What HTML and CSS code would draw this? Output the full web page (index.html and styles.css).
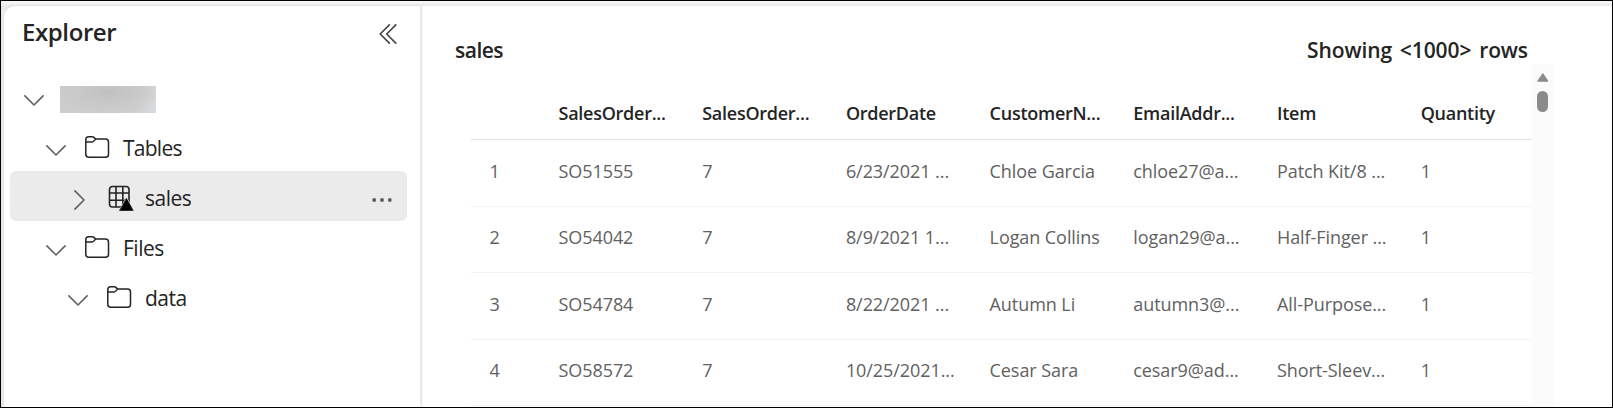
FILE: index.html
```html
<!DOCTYPE html>
<html lang="en">
<head>
<meta charset="utf-8">
<title>Explorer</title>
<link rel="stylesheet" href="styles.css">
</head>
<body>
<svg class="defs" width="0" height="0">
  <symbol id="down" viewBox="0 0 20 11"><path d="M.9.9 10 10 19.1.9"/></symbol>
  <symbol id="folder" viewBox="0 0 26 24"><path d="M1.8 4.5A2.8 2.8 0 0 1 4.600 1.700H8.300C10 1.700 10.700 4 12.200 4H21.500A3 3 0 0 1 24.500 7V19.200A3 3 0 0 1 21.500 22.200H4.800A3 3 0 0 1 1.800 19.200ZM1.800 6.900H8.300C10 6.900 10.700 4 12.200 4"/></symbol>
</svg>
<div class="app">
  <aside class="explorer">
    <header class="explorer-head">
      <h1 class="explorer-title">Explorer</h1>
      <svg class="collapse" viewBox="0 0 18 20"><path d="M10.300.9 1.200 10l9.100 9.100M16.800.9 7.700 10l9.100 9.100"/></svg>
    </header>
    <div class="tree">
      <div class="node level-0"><svg class="chev"><use href="#down"/></svg><span class="redacted"></span></div>
      <div class="node level-1"><svg class="chev"><use href="#down"/></svg><svg class="folder"><use href="#folder"/></svg><span class="label tables">Tables</span></div>
      <div class="node level-2 selected">
        <svg class="chev-right" viewBox="0 0 11 20"><path d="M.9.9 10 10 .9 19.100"/></svg>
        <svg class="table-icon" viewBox="0 0 26 27">
          <path class="grid" d="M4.500 1.500H18A3 3 0 0 1 21 4.500V19A3 3 0 0 1 18 22H4.500A3 3 0 0 1 1.500 19V4.500A3 3 0 0 1 4.500 1.500ZM1.500 8H21M1.500 15.200H21M8 1.500V22M14.800 1.500V22"/>
          <path class="halo" d="M18.500 11.500 27 27H10Z"/>
          <path class="delta" d="M18.500 13.500 25.200 25.500H11.800Z"/>
        </svg>
        <span class="label">sales</span>
        <svg class="more" viewBox="0 0 20 4"><circle cx="2.200" cy="2" r="2"/><circle cx="10" cy="2" r="2"/><circle cx="17.800" cy="2" r="2"/></svg>
      </div>
      <div class="node level-1"><svg class="chev"><use href="#down"/></svg><svg class="folder"><use href="#folder"/></svg><span class="label files">Files</span></div>
      <div class="node level-2"><svg class="chev"><use href="#down"/></svg><svg class="folder"><use href="#folder"/></svg><span class="label">data</span></div>
    </div>
  </aside>
  <main class="preview">
    <header class="preview-head"><h2 class="name">sales</h2><span class="count">Showing &lt;1000&gt; rows</span></header>
    <div class="data">
      <div class="table">
        <div class="row head"><span></span><span>SalesOrder...</span><span>SalesOrder...</span><span>OrderDate</span><span>CustomerN...</span><span>EmailAddr...</span><span>Item</span><span>Quantity</span></div>
        <div class="row"><span class="num">1</span><span>SO51555</span><span>7</span><span>6/23/2021 ...</span><span>Chloe Garcia</span><span>chloe27@a...</span><span>Patch Kit/8 ...</span><span>1</span></div>
        <div class="row"><span class="num">2</span><span>SO54042</span><span>7</span><span>8/9/2021 1...</span><span>Logan Collins</span><span>logan29@a...</span><span>Half-Finger ...</span><span>1</span></div>
        <div class="row"><span class="num">3</span><span>SO54784</span><span>7</span><span>8/22/2021 ...</span><span>Autumn Li</span><span>autumn3@...</span><span>All-Purpose...</span><span>1</span></div>
        <div class="row"><span class="num">4</span><span>SO58572</span><span>7</span><span>10/25/2021...</span><span>Cesar Sara</span><span>cesar9@ad...</span><span>Short-Sleev...</span><span>1</span></div>
      </div>
      <div class="scrollbar"><svg class="arrow" viewBox="0 0 12 9"><path d="M6 .8 11 8.200H1Z"/></svg><div class="thumb"></div></div>
    </div>
  </main>
</div>
</body>
</html>
```
FILE: styles.css
```css
* { box-sizing: border-box; }
body { margin: 0; font-family: "Open Sans", "Noto Sans", sans-serif; color: #242424; }
.defs { position: absolute; }
svg { flex: none; fill: none; stroke: #616161; stroke-width: 1.6; stroke-linecap: round; stroke-linejoin: round; }

.app { display: flex; height: 408px; padding: 5px 0 0 3px; border: 1px solid #000; background: linear-gradient(#fbf9fa, #e9e6e7 6px, #eee9ea 7px); overflow: hidden; }

.explorer { width: 417px; flex: none; background: #fff; border-top-left-radius: 11px; box-shadow: 0 0 2px #d0cccd; }
.explorer-head { display: flex; justify-content: space-between; height: 55px; padding: 0 24px 0 18px; }
.explorer-title { margin: 8px 0 0; font-size: 24px; line-height: 36px; font-weight: 600; letter-spacing: -0.4px; }
.collapse { width: 18px; height: 20px; margin: 18px 0 0; stroke: #424242; }

.tree { padding: 10px 14px 0 6px; }
.node { display: flex; align-items: center; height: 50px; border-radius: 6px; }
.level-0 { padding-left: 14px; }
.level-1 { padding-left: 36px; }
.level-2 { padding-left: 58px; }
.selected { background: #ebebeb; }
.chev { width: 20px; height: 11px; margin-top: 9px; }
.redacted { width: 96px; height: 27px; margin: 7px 0 0 16px; background: radial-gradient(ellipse at 50% 20%, #c0c0c0, #c8c8c8 40%, rgba(200,200,200,0) 80%), linear-gradient(90deg, #cecccd, #d0d0d0 80%, #d8dadd); }
.folder { width: 26px; height: 24px; margin: 2px 0 0 18px; stroke: #242424; stroke-width: 1.5; }
.chev-right { width: 11px; height: 20px; margin: 7px 0 0 6px; }
.table-icon { width: 26px; height: 27px; margin: 5px 0 0 23px; stroke: #242424; }
.halo { fill: #ebebeb; stroke: none; }
.delta { fill: #000; stroke: #000; stroke-width: .6; }
.label { font-size: 21px; line-height: 30px; letter-spacing: -0.5px; margin: 4px 0 0 13px; }
.tables { letter-spacing: -0.75px; }
.selected .label { margin-left: 11px; }
.more { width: 20px; height: 4px; margin: 7px 15px 0 auto; fill: #616161; stroke: none; }

.preview { flex: 1; min-width: 0; background: #fff; box-shadow: -1px 0 0 #ececec, inset 2px 0 2px -1px #e0e0e0; }
.preview-head { display: flex; justify-content: space-between; height: 57px; padding: 29px 84px 0 34px; font-size: 21px; line-height: 30px; font-weight: 600; }
.name { margin: 0; font-size: 21px; font-weight: 600; letter-spacing: -0.5px; }
.count { letter-spacing: -0.1px; word-spacing: 2.500px; }
.data { display: flex; height: 345px; padding-left: 50px; overflow: hidden; }
.table { width: 1061px; flex: none; font-size: 18px; line-height: 24px; letter-spacing: -0.07px; color: #616161; }
.row { display: grid; grid-template-columns: 87.500px repeat(7, 143.7px); height: 66.500px; padding-top: 18.5px; white-space: nowrap; border-bottom: 1px solid #f3f3f3; overflow: hidden; }
.head { height: 77px; padding-top: 38px; color: #242424; font-weight: 600; letter-spacing: -0.26px; border-color: #e0e0e0; }
.num { width: 47px; text-align: center; }
.scrollbar { width: 21px; margin-top: 1px; background: #fbfbfb; display: flex; flex-direction: column; align-items: center; padding-top: 9px; }
.arrow { width: 12px; height: 9px; fill: #8a8a8a; stroke: #8a8a8a; stroke-width: 1; }
.thumb { width: 11px; height: 21px; margin-top: 9px; border-radius: 6px; background: #8a8a8a; }
```
